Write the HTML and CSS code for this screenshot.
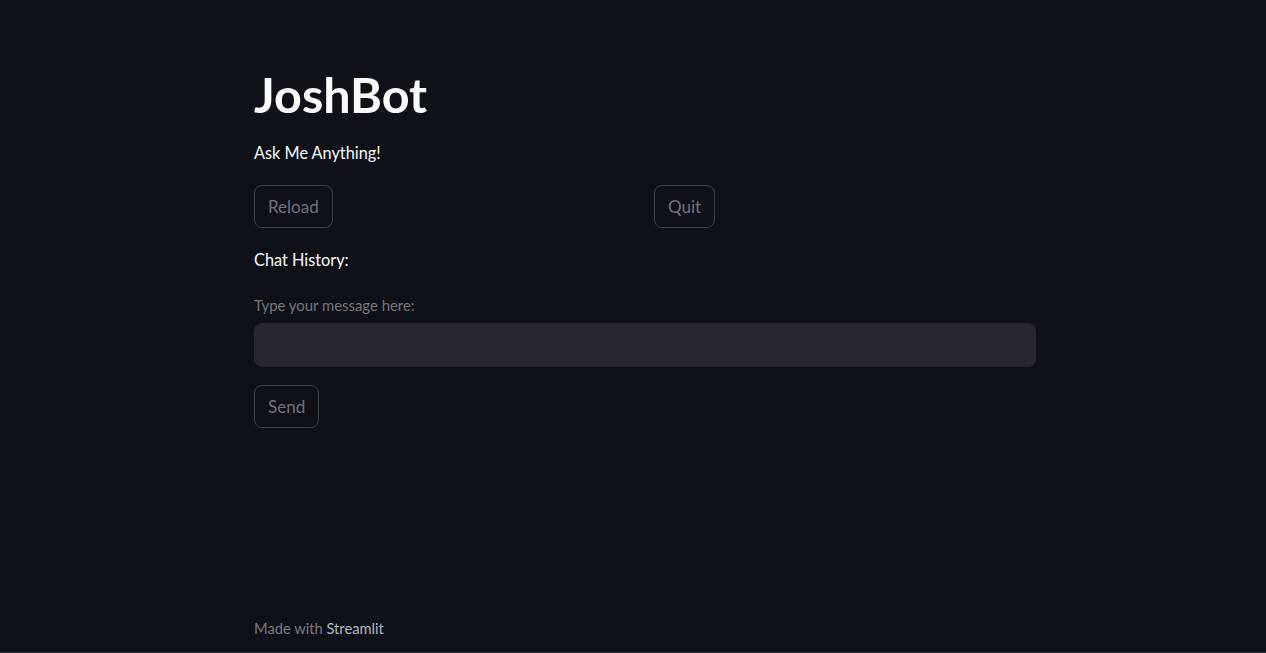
FILE: index.html
```html
<!DOCTYPE html>
<html>
<head>
<meta charset="utf-8">
<link rel="stylesheet" href="styles.css">
</head>
<body>
<div class="app">
  <main class="main">
    <h1 class="title">JoshBot</h1>
    <p class="text">Ask Me Anything!</p>
    <div class="cols">
      <div class="col"><button class="btn">Reload</button></div>
      <div class="col"><button class="btn">Quit</button></div>
    </div>
    <p class="text history">Chat History:</p>
    <label class="label">Type your message here:</label>
    <div class="input"></div>
    <button class="btn send">Send</button>
  </main>
  <footer class="footer">Made with <span class="brand">Streamlit</span></footer>
  <div class="bottom-line"></div>
</div>
</body>
</html>
```

FILE: styles.css
```css
html, body {
  margin: 0;
  padding: 0;
  background: #0e1117;
  height: 100%;
}
body {
  font-family: "Lato", "Noto Sans", sans-serif;
  color: #fafafa;
}
.app {
  height: 653px;
  display: flex;
  flex-direction: column;
  overflow: hidden;
}
.main {
  padding: 68px 0 0 254px;
  width: 782px;
  display: flex;
  flex-direction: column;
  align-items: flex-start;
  flex: 1;
}
.title {
  margin: 0;
  font-size: 48.5px;
  font-weight: 700;
  line-height: 52px;
}
.text {
  margin: 21px 0 0;
  font-size: 16.3px;
  line-height: 24px;
}
.cols {
  margin-top: 20px;
  display: grid;
  grid-template-columns: 1fr 1fr;
  column-gap: 18px;
  width: 100%;
}
.btn {
  font-family: inherit;
  font-size: 17px;
  color: #717377;
  background: transparent;
  border: 1px solid rgba(250, 250, 250, 0.2);
  border-radius: 8px;
  height: 43px;
  padding: 0 13px;
  cursor: pointer;
}
.history {
  margin-top: 20px;
}
.label {
  margin-top: 23px;
  font-size: 14.9px;
  line-height: 20px;
  color: #77797d;
}
.input {
  margin-top: 8px;
  width: 782px;
  height: 44px;
  border-radius: 8px;
  background: #262730;
}
.send {
  margin-top: 18px;
}
.footer {
  padding: 0 0 14px 254px;
  font-size: 14.7px;
  line-height: 20px;
  color: #7a7c80;
}
.brand {
  color: #b4b6ba;
}
.bottom-line {
  height: 1px;
  background: #2c2f33;
  flex: none;
}
```
